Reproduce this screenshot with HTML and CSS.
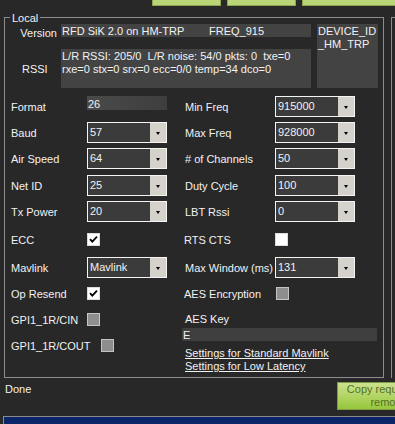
FILE: index.html
```html
<!DOCTYPE html>
<html>
<head>
<meta charset="utf-8">
<link rel="stylesheet" href="styles.css">
</head>
<body>
<div class="page">
  <div class="topbar"><div class="tbtn"></div><div class="tbtn"></div><div class="tbtn wide"></div></div>
  <div class="main">
    <fieldset class="local">
      <legend>Local</legend>
      <div class="top">
        <div class="lbl-version">Version</div>
        <div class="tb ver"><span class="ver-a">RFD SiK 2.0 on HM-TRP</span><span>FREQ_915</span></div>
        <div class="tb devid">DEVICE_ID_HM_TRP</div>
        <div class="lbl-rssi">RSSI</div>
        <div class="tb rssi">L/R RSSI: 205/0  L/R noise: 54/0 pkts: 0  txe=0
rxe=0 stx=0 srx=0 ecc=0/0 temp=34 dco=0</div>
      </div>
      <div class="form">
        <div class="lbl c1">Format</div>
        <div class="tbox c2">26</div>
        <div class="lbl c4">Min Freq</div>
        <div class="combo c5"><span class="val">915000</span><span class="dd"></span></div>

        <div class="lbl c1">Baud</div>
        <div class="combo c2"><span class="val">57</span><span class="dd"></span></div>
        <div class="lbl c4">Max Freq</div>
        <div class="combo c5"><span class="val">928000</span><span class="dd"></span></div>

        <div class="lbl c1">Air Speed</div>
        <div class="combo c2"><span class="val">64</span><span class="dd"></span></div>
        <div class="lbl c4"># of Channels</div>
        <div class="combo c5"><span class="val">50</span><span class="dd"></span></div>

        <div class="lbl c1">Net ID</div>
        <div class="combo c2"><span class="val">25</span><span class="dd"></span></div>
        <div class="lbl c4">Duty Cycle</div>
        <div class="combo c5"><span class="val">100</span><span class="dd"></span></div>

        <div class="lbl c1">Tx Power</div>
        <div class="combo c2"><span class="val">20</span><span class="dd"></span></div>
        <div class="lbl c4">LBT Rssi</div>
        <div class="combo c5"><span class="val">0</span><span class="dd"></span></div>

        <div class="lbl c1">ECC</div>
        <div class="cell c2"><span class="cb on"><svg width="11" height="11" viewBox="0 0 11 11"><path d="M2 5.2 L4.3 7.6 L9 2.6" fill="none" stroke="#000" stroke-width="1.8"/></svg></span></div>
        <div class="lbl c4 rl">RTS CTS</div>
        <div class="cell c5"><span class="cb"></span></div>

        <div class="lbl c1">Mavlink</div>
        <div class="combo c2"><span class="val">Mavlink</span><span class="dd"></span></div>
        <div class="lbl c4">Max Window (ms)</div>
        <div class="combo c5"><span class="val">131</span><span class="dd"></span></div>

        <div class="lbl c1">Op Resend</div>
        <div class="cell c2"><span class="cb on"><svg width="11" height="11" viewBox="0 0 11 11"><path d="M2 5.2 L4.3 7.6 L9 2.6" fill="none" stroke="#000" stroke-width="1.8"/></svg></span></div>
        <div class="lbl c4 rl">AES Encryption</div>
        <div class="cell c5"><span class="cb dis shift"></span></div>

        <div class="lbl c1">GPI1_1R/CIN</div>
        <div class="cell c2"><span class="cb dis"></span></div>
        <div class="aes">
          <div class="aes-lbl">AES Key</div>
          <div class="aes-box">E</div>
          <a class="link first">Settings for Standard Mavlink</a>
          <a class="link">Settings for Low Latency</a>
        </div>

        <div class="lbl cout">GPI1_1R/COUT<span class="cb dis"></span></div>
      </div>
    </fieldset>
    <div class="other"></div>
  </div>
  <div class="bottom">
    <div class="done">Done</div>
    <div class="gbtn">Copy required to remote</div>
  </div>
  <div class="status"></div>
</div>
</body>
</html>
```

FILE: styles.css
```css
* { box-sizing: border-box; }
html, body { margin: 0; padding: 0; }
body {
  background: #282828;
  font-family: "Liberation Sans", Arial, sans-serif;
  font-size: 11px;
  color: #f2f2f2;
}
.page { width: 395px; height: 424px; overflow: hidden; }

.topbar { height: 10px; display: flex; gap: 6px; padding-left: 152px; }
.tbtn {
  width: 69px; height: 6px;
  background: #b9d577;
  border: 1px solid #8ea550; border-top: none;
}
.tbtn.wide { flex: 1; margin-right: -10px; }

.main { display: flex; height: 368px; }
.local {
  margin: 0 0 0 4px; padding: 0; min-width: 0;
  width: 380px; height: 368px;
  border: 1px solid #8c8c8c;
}
.local legend { margin-left: 5px; padding: 0 2px; height: 14px; line-height: 16px; }
.other {
  flex: 1; margin-left: 7px; margin-top: 7px;
  border-left: 1px solid #8c8c8c; border-top: 1px solid #8c8c8c;
  margin-right: -10px;
}

.top {
  display: grid;
  grid-template-columns: 56px 250px 6px 61px;
  grid-template-rows: 13px 12px 39px;
}
.tb { background: #434343; color: #f2f2f2; }
.lbl-version { grid-column: 1; grid-row: 1; justify-self: end; margin-right: 4px; margin-top: 3px; line-height: 13px; }
.ver { grid-column: 2; grid-row: 1; display: flex; padding: 1px 0 0 1px; line-height: 12px; white-space: nowrap; }
.ver-a { width: 147px; }
.devid {
  grid-column: 4; grid-row: 1 / 4;
  padding: 1px 0 0 1px; line-height: 12.5px;
  word-break: break-all;
}
.lbl-rssi { grid-column: 1; grid-row: 3; align-self: center; margin-left: 17px; }
.rssi { grid-column: 2; grid-row: 3; padding: 1px 0 0 1px; line-height: 13px; white-space: pre; overflow: hidden; }

.form {
  margin: 8px 0 0 6px;
  display: grid;
  grid-template-columns: 76px 80px 18px 90px 80px;
  grid-template-rows: 26px 26px 27px 26px 28px 28px 26px 26px 26px 21px;
}
.c1 { grid-column: 1; }
.c2 { grid-column: 2; }
.c4 { grid-column: 4; }
.c5 { grid-column: 5; }
.lbl { height: 21px; display: flex; align-items: center; white-space: nowrap; }
.rl { margin-left: -1px; }
.cell { height: 21px; display: flex; align-items: center; }

.tbox {
  height: 14px; align-self: start;
  background: linear-gradient(90deg, #4a4a4a, #3e3e3e);
  padding: 2px 0 0 1px; line-height: 12px;
}

.combo {
  height: 21px; align-self: start;
  border: 1px solid #f4f4f4;
  background: #3b3b3b;
  display: flex;
}
.combo .val { flex: 1; padding-left: 2px; line-height: 19px; white-space: nowrap; }
.combo .dd {
  width: 16px; background: #d5d2cc;
  display: flex; align-items: center; justify-content: center;
}
.combo .dd::after {
  content: ""; width: 0; height: 0;
  border-left: 2.5px solid transparent; border-right: 2.5px solid transparent;
  border-top: 3px solid #000;
  margin-top: 1px;
}

.cb {
  width: 13px; height: 13px;
  border: 1px solid #dcdcdc;
  background: #ffffff;
  display: flex; align-items: center; justify-content: center;
}
.cb.dis { background: #8e8e8e; border-color: #c4c4c4; }
.cb.shift { margin-left: 1px; }

.aes { grid-column: 4 / 6; grid-row: 9 / 11; display: flex; flex-direction: column; align-items: flex-start; }
.aes-lbl { margin-top: 4px; line-height: 13px; }
.aes-box {
  margin: 2px 0 0 -3px; width: 195px; height: 14px;
  background: #3f3f3f; padding: 1px 0 0 1px; line-height: 12px;
}
.link { color: #f2f2f2; text-decoration: underline; line-height: 13px; white-space: nowrap; }
.link.first { margin-top: 6px; }

.cout { grid-column: 1 / 3; grid-row: 10; gap: 11px; }

.bottom { display: flex; height: 38px; }
.done { width: 332px; flex-shrink: 0; margin-left: 5px; margin-top: 5px; line-height: 13px; }
.gbtn {
  flex-shrink: 0; width: 101px; height: 28px; margin-top: 4px;
  background: linear-gradient(180deg, #cbe28c 0%, #b2d564 50%, #96c63c 100%);
  border: 1px solid #7f9b48;
  color: #55702a; text-align: center;
  line-height: 13px; padding-top: 0.5px;
  display: flex; align-items: center; justify-content: center;
}
.status {
  margin-left: 3px; height: 10px;
  background: #0c2468;
  border-top: 1px solid #8a8a8a; border-left: 1px solid #8a8a8a;
}
```
